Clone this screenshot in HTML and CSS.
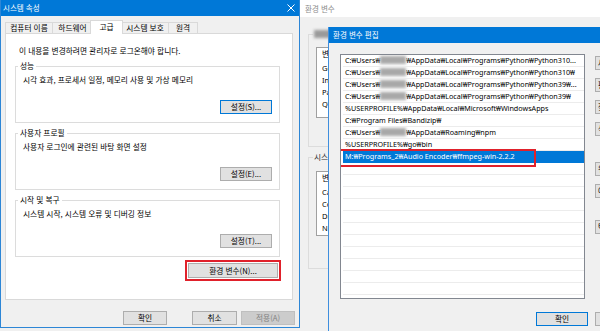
FILE: index.html
```html
<!DOCTYPE html>
<html lang="ko">
<head>
<meta charset="utf-8">
<title>시스템 속성</title>
<link rel="stylesheet" href="styles.css">
</head>
<body>
<div class="desk">
  <section class="win sys">
    <header class="tb tb-on">
      <span>시스템 속성</span>
      <svg class="close" width="8" height="8" viewBox="0 0 8 8"><path d="M0.5 0.5L7.5 7.5M7.5 0.5L0.5 7.5" stroke="#fff" stroke-width="1"/></svg>
    </header>
    <div class="sys-body">
      <div class="tabs">
        <div class="tab t1">컴퓨터 이름</div>
        <div class="tab t2">하드웨어</div>
        <div class="tab t3 on">고급</div>
        <div class="tab t4">시스템 보호</div>
        <div class="tab t5">원격</div>
      </div>
      <div class="panel">
        <p class="note">이 내용을 변경하려면 관리자로 로그온해야 합니다.</p>
        <fieldset class="grp">
          <legend>성능</legend>
          <p class="desc">시각 효과, 프로세서 일정, 메모리 사용 및 가상 메모리</p>
          <div class="grp-act"><button class="btn set focus">설정(S)...</button></div>
        </fieldset>
        <fieldset class="grp">
          <legend>사용자 프로필</legend>
          <p class="desc">사용자 로그인에 관련된 바탕 화면 설정</p>
          <div class="grp-act"><button class="btn set">설정(E)...</button></div>
        </fieldset>
        <fieldset class="grp">
          <legend>시작 및 복구</legend>
          <p class="desc">시스템 시작, 시스템 오류 및 디버깅 정보</p>
          <div class="grp-act"><button class="btn set">설정(T)...</button></div>
        </fieldset>
        <div class="env-row"><button class="btn env-btn">환경 변수(N)...</button></div>
      </div>
      <div class="foot">
        <button class="btn ok">확인</button>
        <button class="btn cancel">취소</button>
        <button class="btn apply" disabled>적용(A)</button>
      </div>
    </div>
  </section>

  <section class="win env">
    <header class="tb tb-off"><span>환경 변수</span></header>
    <div class="env-body">
      <fieldset class="egrp g1">
        <legend><span class="blur lg"></span>에 대한 사용자 변수(U)</legend>
        <div class="vlist l1">
          <div class="vhead">변수</div>
          <div class="vrow">GoLand</div>
          <div class="vrow">IntelliJ IDEA</div>
          <div class="vrow">Path</div>
          <div class="vrow">QT_PATH</div>
        </div>
      </fieldset>
      <fieldset class="egrp g2">
        <legend>시스템 변수(S)</legend>
        <div class="vlist l2">
          <div class="vhead">변수</div>
          <div class="vrow">Cargo</div>
          <div class="vrow">ComSpec</div>
          <div class="vrow">DriverData</div>
          <div class="vrow">NUMBER_OF_PROCESSORS</div>
        </div>
      </fieldset>
    </div>
  </section>

  <section class="win edit">
    <header class="tb tb-on"><span>환경 변수 편집</span></header>
    <div class="edit-body">
      <div class="edit-main">
        <div class="plist">
          <div class="prow">C:₩Users₩<span class="blur"></span>₩AppData₩Local₩Programs₩Python₩Python310...</div>
          <div class="prow">C:₩Users₩<span class="blur"></span>₩AppData₩Local₩Programs₩Python₩Python310₩</div>
          <div class="prow">C:₩Users₩<span class="blur"></span>₩AppData₩Local₩Programs₩Python₩Python39₩...</div>
          <div class="prow">C:₩Users₩<span class="blur"></span>₩AppData₩Local₩Programs₩Python₩Python39₩</div>
          <div class="prow">%USERPROFILE%₩AppData₩Local₩Microsoft₩WindowsApps</div>
          <div class="prow">C:₩Program Files₩Bandizip₩</div>
          <div class="prow">C:₩Users₩<span class="blur"></span>₩AppData₩Roaming₩npm</div>
          <div class="prow">%USERPROFILE%₩go₩bin</div>
          <div class="prow sel">M:₩Programs_2₩Audio Encoder₩ffmpeg-win-2.2.2</div>
          <div class="prow"></div>
          <div class="prow"></div>
          <div class="prow"></div>
          <div class="prow"></div>
          <div class="prow"></div>
          <div class="prow"></div>
          <div class="prow"></div>
          <div class="prow"></div>
          <div class="prow"></div>
          <div class="prow"></div>
          <div class="prow"></div>
          <div class="prow"></div>
          <div class="mark"></div>
        </div>
        <div class="side">
          <button class="btn sbtn">새로 만들기(N)</button>
          <button class="btn sbtn">편집(E)</button>
          <button class="btn sbtn">찾아보기(B)...</button>
          <button class="btn sbtn gap-after">삭제(D)</button>
          <button class="btn sbtn">위로 이동(U)</button>
          <button class="btn sbtn gap-after2">아래로 이동(O)</button>
          <button class="btn sbtn">텍스트 편집(T)...</button>
        </div>
      </div>
      <div class="edit-foot">
        <button class="btn eok">확인</button>
        <button class="btn ecancel">취소</button>
      </div>
    </div>
  </section>
</div>
</body>
</html>
```

FILE: styles.css
```css
* { box-sizing: border-box; }
html, body {
  margin: 0;
  padding: 0;
  width: 600px;
  height: 331px;
  overflow: hidden;
  background: #f0f0f0;
  font-family: "Noto Sans CJK KR", "Noto Sans", sans-serif;
  font-size: 7.7px;
  color: #000;
}
.desk {
  position: relative;
  width: 600px;
  height: 331px;
  overflow: hidden;
}
.win {
  position: absolute;
  background: #f0f0f0;
  display: flex;
  flex-direction: column;
}
p { margin: 0; }

/* title bars */
.tb {
  flex: none;
  display: flex;
  align-items: center;
  justify-content: space-between;
  font-size: 7.5px;
  line-height: 10px;
}
.tb-on { background: #0078d7; color: #fff; }
.tb-off { background: #fff; color: #8a8a8a; }

/* ---------- system properties ---------- */
.sys {
  left: 0;
  top: 0;
  width: 300px;
  height: 328px;
  border: 1px solid #2d86d6;
  border-top: 0;
}
.sys .tb { height: 16px; padding: 0 4px 0 2px; }
.close { display: block; }
.sys-body {
  padding: 0 6px 0 4px;
  display: flex;
  flex-direction: column;
}
.tabs {
  margin-top: 4px;
  height: 13px;
  display: flex;
  align-items: flex-end;
}
.tab {
  height: 11px;
  border: 1px solid #d9d9d9;
  border-bottom: 0;
  background: #f0f0f0;
  display: flex;
  align-items: center;
  justify-content: center;
  line-height: 10px;
  white-space: nowrap;
}
.t1 { width: 48px; }
.t2 { width: 41px; margin-left: -1px; }
.t3 { width: 33px; margin-left: -3px; }
.t4 { width: 48px; margin-left: -2px; }
.t5 { width: 30px; margin-left: -1px; }
.tab.on {
  height: 14px;
  margin-bottom: -1px;
  background: #fff;
  position: relative;
  z-index: 1;
  padding-bottom: 2px;
}
.panel {
  height: 267px;
  background: #fff;
  border: 1px solid #d9d9d9;
  padding: 12px 12px 0 9px;
}
.note {
  margin: 0 0 5px 4px;
  line-height: 10px;
}
.grp {
  margin: 0 0 5px 0;
  border: 1px solid #dcdcdc;
  padding: 4px 7px 8px 7px;
  min-width: 0;
}
.grp legend {
  padding: 0 2px;
  margin-left: -5px;
  line-height: 10px;
  height: 10px;
}
.desc { line-height: 10px; }
.grp-act {
  margin-top: 15px;
  display: flex;
  justify-content: flex-end;
}
.env-row {
  margin-top: 6px;
  display: flex;
  justify-content: flex-end;
  padding-right: 2px;
}

/* buttons */
.btn {
  font-family: "Noto Sans CJK KR", "Noto Sans", sans-serif;
  font-size: 7.7px;
  line-height: 10px;
  height: 14px;
  padding: 0;
  border: 1px solid #adadad;
  background: #e1e1e1;
  color: #000;
  display: flex;
  align-items: center;
  justify-content: center;
  white-space: nowrap;
  flex: none;
}
.btn.set { width: 52px; }
.btn.focus { border-color: #0078d7; }
.env-btn {
  width: 90px;
  height: 15px;
  outline: 2px solid #e0212b;
  outline-offset: 1px;
}
.foot {
  margin-top: 11px;
  margin-right: -2px;
  display: flex;
  justify-content: flex-end;
}
.ok { width: 44px; }
.cancel { width: 45px; margin-left: 25px; }
.apply {
  width: 54px;
  margin-left: 4px;
  background: #cccccc;
  border-color: #bfbfbf;
  color: #838383;
}

/* ---------- environment variables (behind) ---------- */
.env {
  left: 300px;
  top: 0;
  width: 320px;
  height: 331px;
}
.env .tb { height: 17px; padding-left: 5px; }
.env-body {
  padding-left: 8px;
  display: flex;
  flex-direction: column;
}
.egrp {
  margin: 0;
  border: 1px solid #dcdcdc;
  padding: 8px 0 28px 7px;
  min-width: 0;
}
.egrp legend {
  padding: 0 1px;
  margin-left: -3px;
  height: 10px;
  line-height: 10px;
  color: #333;
  white-space: nowrap;
}
.g1 { margin-top: 12px; }
.g2 { margin-top: 5px; padding-top: 9px; padding-bottom: 32px; }
.blur {
  display: inline-block;
  width: 26px;
  height: 8px;
  background: #a8a8a8;
  filter: blur(1.6px);
  vertical-align: -1px;
}
.blur.lg { width: 40px; background: #9a9a9a; }
.vlist {
  background: #fff;
  border: 1px solid #a0a0a0;
  font-family: "Noto Sans", "Noto Sans CJK KR", sans-serif;
  font-size: 7.5px;
  overflow: hidden;
}
.l1 { height: 71px; }
.l2 { height: 65px; }
.vhead {
  height: 14px;
  line-height: 12px;
  padding-left: 5px;
  font-family: "Noto Sans CJK KR", sans-serif;
}
.vrow {
  height: 12px;
  line-height: 12px;
  padding-left: 5px;
  white-space: nowrap;
}

/* ---------- edit environment variable (front) ---------- */
.edit {
  left: 328px;
  top: 27px;
  width: 290px;
  height: 320px;
  border-left: 1px solid #3e8ede;
}
.edit .tb { height: 16px; padding-left: 4px; }
.edit-body {
  padding: 11px 0 0 11px;
  display: flex;
  flex-direction: column;
}
.edit-main {
  display: flex;
  align-items: flex-start;
}
.plist {
  position: relative;
  width: 245px;
  height: 245px;
  background: #fff;
  border: 1px solid #828790;
  flex: none;
  overflow: hidden;
}
.prow {
  margin-left: 2px;
  width: 241px;
  height: 12px;
  border-bottom: 1px solid #ececec;
  padding-left: 2px;
  font-family: "Noto Sans", "DejaVu Sans", "Noto Sans CJK KR", sans-serif;
  font-size: 7.2px;
  line-height: 11px;
  white-space: nowrap;
  overflow: hidden;
}
.prow.sel {
  background: #0078d7;
  color: #fff;
  border-bottom-color: #0078d7;
}
.mark {
  position: absolute;
  left: -4px;
  top: 94px;
  width: 199px;
  height: 18px;
  border: 2px solid #e0212b;
}
.side {
  margin-left: 10px;
  padding-top: 2px;
  display: flex;
  flex-direction: column;
}
.sbtn {
  width: 60px;
  margin-bottom: 8px;
  justify-content: flex-start;
  padding-left: 2px;
}
.sbtn.gap-after { margin-bottom: 26px; }
.sbtn.gap-after2 { margin-bottom: 22px; }
.edit-foot {
  margin-top: 13px;
  padding-left: 196px;
  display: flex;
}
.eok { width: 52px; border-color: #0078d7; }
.ecancel { width: 52px; margin-left: 7px; }
```
